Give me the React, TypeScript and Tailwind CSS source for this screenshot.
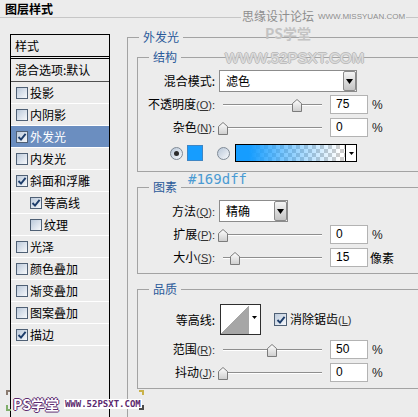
import React from "react";

function CheckBox({ checked, size = 12 }: { checked?: boolean; size?: number }) {
  return (
    <span
      className={`relative inline-flex shrink-0 items-center justify-center border border-[#4f6075] bg-gradient-to-br from-[#bccadb] to-[#f6f8fb] ${
        size === 13 ? "w-[13px] h-[13px]" : "w-[12px] h-[12px]"
      }`}
    >
      {checked && (
        <svg width="10" height="10" viewBox="0 0 10 10" className="absolute">
          <path d="M1.5 5 L4 7.6 L8.6 1.8" fill="none" stroke="#1d3d6b" strokeWidth="1.9" />
        </svg>
      )}
    </span>
  );
}

function Arrow() {
  return (
    <svg width="7" height="5" viewBox="0 0 7 5">
      <path d="M0 0 H7 L3.5 5 Z" fill="#000" />
    </svg>
  );
}

function Label({ text, k }: { text: string; k?: string }) {
  return (
    <div className="w-[77px] shrink-0 text-right whitespace-nowrap leading-[16px]">
      {text}
      {k ? (
        <span className="font-['Liberation_Sans',sans-serif] text-[11px] text-[#333]">
          (<span className="underline">{k}</span>):
        </span>
      ) : (
        ":"
      )}
    </div>
  );
}

function Thumb() {
  return (
    <svg width="10" height="13" viewBox="0 0 10 13">
      <defs>
        <linearGradient id="thumbg" x1="0" y1="0" x2="0" y2="1">
          <stop offset="0" stopColor="#ffffff" />
          <stop offset="1" stopColor="#cdcdcd" />
        </linearGradient>
      </defs>
      <path d="M0.5 12.5 V4.5 L5 0.5 L9.5 4.5 V12.5 Z" fill="url(#thumbg)" stroke="#7b7b7b" />
    </svg>
  );
}

function Slider({ pos }: { pos: number }) {
  return (
    <div className="relative w-[111px] h-full shrink-0">
      <div className="absolute left-[8px] top-[9px] w-[99px] h-[1px] bg-[#8e8e8e] shadow-[0_1px_0_#ffffff]" />
      <div className="absolute top-[4px] flex" style={{ left: pos }}>
        <Thumb />
      </div>
    </div>
  );
}

function NumBox({ v }: { v: string }) {
  return (
    <div className="ml-[4px] w-[38px] h-[19px] shrink-0 border border-[#b3b3b3] bg-white pl-[5px] font-['Liberation_Sans',sans-serif] text-[12px] leading-[17px]">
      {v}
    </div>
  );
}

function SliderRow({
  text,
  k,
  pos,
  v,
  unit,
  cls,
}: {
  text: string;
  k: string;
  pos: number;
  v: string;
  unit: string;
  cls: string;
}) {
  return (
    <div className={`flex items-center h-[19px] ${cls}`}>
      <Label text={text} k={k} />
      <Slider pos={pos} />
      <NumBox v={v} />
      {unit === "%" ? (
        <span className="ml-[4px] font-['Liberation_Sans',sans-serif] text-[12px] text-[#222]">%</span>
      ) : (
        <span className="ml-[2px] text-[12px]">{unit}</span>
      )}
    </div>
  );
}

function Select({ text, w }: { text: string; w: string }) {
  return (
    <div className={`ml-[4px] h-full flex border border-[#8c8c8c] bg-white ${w}`}>
      <div className="flex-1 pl-[6px] leading-[20px]">{text}</div>
      <div className="w-[13px] h-full rounded-[2px] border border-[#8a8a8a] bg-gradient-to-b from-[#f4f4f4] to-[#c4c4c4] flex items-center justify-center">
        <Arrow />
      </div>
    </div>
  );
}

function GroupLabel({ text }: { text: string }) {
  return (
    <span className="absolute left-[11px] top-[-9px] px-[4px] bg-[#ececec] text-[#2b5a9a] leading-[16px] text-[12px]">
      {text}
    </span>
  );
}

function Radio({ on }: { on?: boolean }) {
  return (
    <span className="relative inline-flex w-[13px] h-[13px] shrink-0 items-center justify-center rounded-full border border-[#7f8a96] bg-gradient-to-br from-[#b9c7d8] to-[#f7f9fc]">
      {on && <span className="w-[5px] h-[5px] rounded-full bg-[#2b2b2b]" />}
    </span>
  );
}

const items: { t: string; c?: boolean; sel?: boolean; indent?: boolean }[] = [
  { t: "投影" },
  { t: "内阴影" },
  { t: "外发光", c: true, sel: true },
  { t: "内发光" },
  { t: "斜面和浮雕", c: true },
  { t: "等高线", c: true, indent: true },
  { t: "纹理", indent: true },
  { t: "光泽" },
  { t: "颜色叠加" },
  { t: "渐变叠加" },
  { t: "图案叠加" },
  { t: "描边", c: true },
];

export default function App() {
  return (
    <div className="relative w-[418px] h-[417px] overflow-hidden bg-[#ececec] text-[12px] text-black font-['Noto_Sans_CJK_SC','Noto_Sans',sans-serif]">
      {/* title bar */}
      <div className="h-[18px] border-b border-[#c6c6c6] pl-[5px] font-bold text-[12px] leading-[17px]">图层样式</div>

      <div className="flex">
        {/* left list */}
        <div className="ml-[10px] mt-[16px] w-[100px] h-[400px] shrink-0 border border-b-0 border-black">
          <div className="h-[24px] border-b-[3px] border-double border-black pl-[4px] leading-[21px]">样式</div>
          <div className="h-[23px] border-b border-[#505050] pl-[4px] leading-[22px]">混合选项:默认</div>
          {items.map((it) => (
            <div
              key={it.t}
              className={`h-[22px] border-b border-white flex items-center gap-[2px] ${
                it.indent ? "pl-[19px]" : "pl-[5px]"
              } ${it.sel ? "bg-[#6b8ec0] text-white" : ""}`}
            >
              <CheckBox checked={it.c} />
              <span className="leading-[21px]">{it.t}</span>
            </div>
          ))}
        </div>

        {/* right: 外发光 */}
        <div className="relative ml-[17px] mt-[19px] flex-1 h-[400px] border-l border-t border-[#a3a3a3] pl-[9px] pt-[19px]">
          <GroupLabel text="外发光" />

          {/* 结构 */}
          <div className="relative h-[115px] border border-r-0 border-[#a3a3a3] pt-[12px]">
            <GroupLabel text="结构" />
            <div className="flex items-center h-[22px]">
              <Label text="混合模式" />
              <Select text="滤色" w="w-[138px]" />
            </div>
            <SliderRow text="不透明度" k="O" pos={77} v="75" unit="%" cls="mt-[3px]" />
            <SliderRow text="杂色" k="N" pos={3} v="0" unit="%" cls="mt-[4px]" />
            <div className="mt-[7px] h-[18px] flex items-center">
              <span className="ml-[32px] flex">
                <Radio on />
              </span>
              <span className="ml-[4px] w-[16px] h-[16px] bg-[#169dff] border border-[#3f86c4]" />
              <span className="ml-[14px] flex">
                <Radio />
              </span>
              <div className="ml-[5px] w-[122px] h-[18px] border border-black flex bg-white">
                <div className="relative flex-1 h-full bg-[image:repeating-conic-gradient(#cdcdcd_0%_25%,#ffffff_0%_50%)] bg-[length:8px_8px]">
                  <div className="absolute inset-0 bg-[image:linear-gradient(to_right,#169dff_0%,#169dff_12%,rgba(22,157,255,0.55)_45%,rgba(22,157,255,0)_95%)]" />
                </div>
                <div className="w-[11px] h-full border-l border-black bg-white flex items-center justify-center">
                  <svg width="5" height="3" viewBox="0 0 5 3">
                    <path d="M0 0 H5 L2.5 3 Z" fill="#000" />
                  </svg>
                </div>
              </div>
            </div>
          </div>

          {/* color code */}
          <div className="h-[15px] pl-[51px] font-['DejaVu_Sans_Mono',monospace] text-[14px] leading-[15px] text-[#4b9bd3]">
            #169dff
          </div>

          {/* 图素 */}
          <div className="relative h-[87px] border border-r-0 border-[#a3a3a3] pt-[12px]">
            <GroupLabel text="图素" />
            <div className="flex items-center h-[22px]">
              <Label text="方法" k="Q" />
              <Select text="精确" w="w-[69px]" />
            </div>
            <SliderRow text="扩展" k="P" pos={3} v="0" unit="%" cls="mt-[3px]" />
            <SliderRow text="大小" k="S" pos={15} v="15" unit="像素" cls="mt-[4px]" />
          </div>

          {/* 品质 */}
          <div className="relative mt-[15px] h-[100px] border border-r-0 border-[#a3a3a3] pt-[14px]">
            <GroupLabel text="品质" />
            <div className="flex items-center h-[31px]">
              <Label text="等高线" />
              <div className="ml-[5px] w-[41px] h-[31px] border border-[#2e2e2e] flex bg-white">
                <div className="w-[28px] h-full bg-[image:linear-gradient(to_top_left,#a6a6a6_50%,#ffffff_50%)]" />
                <div className="flex-1 h-full flex justify-center pt-[11px]">
                  <svg width="5" height="3" viewBox="0 0 5 3">
                    <path d="M0 0 H5 L2.5 3 Z" fill="#000" />
                  </svg>
                </div>
              </div>
              <span className="ml-[13px] flex">
                <CheckBox checked size={13} />
              </span>
              <span className="ml-[3px] leading-[16px]">
                消除锯齿
                <span className="font-['Liberation_Sans',sans-serif] text-[11px] text-[#333]">
                  (<span className="underline">L</span>)
                </span>
              </span>
            </div>
            <SliderRow text="范围" k="R" pos={52} v="50" unit="%" cls="mt-[5px]" />
            <SliderRow text="抖动" k="J" pos={3} v="0" unit="%" cls="mt-[4px]" />
          </div>
        </div>
      </div>

      {/* watermarks */}
      <div className="absolute left-[241px] top-[9px] flex items-end gap-[4px] whitespace-nowrap bg-[#ececec] px-[1px] text-[#8e8e8e]">
        <span className="text-[12px] leading-[14px]">思缘设计论坛</span>
        <span className="font-['Liberation_Sans',sans-serif] text-[8px] leading-[12px]">WWW.MISSYUAN.COM</span>
      </div>
      <div className="absolute left-[265px] top-[25px] whitespace-nowrap text-[14px] leading-[16px] text-[#c3c3c3] font-bold">PS学堂</div>
      <div className="absolute left-[225px] top-[50px] whitespace-nowrap font-['Liberation_Sans',sans-serif] text-[15px] leading-[16px] text-[#dddddd] [text-shadow:1px_0_#bdbdbd,-1px_0_#bdbdbd,0_1px_#bdbdbd,0_-1px_#bdbdbd]">
        WWW.52PSXT.COM
      </div>

      {/* bottom-left logo */}
      <div className="absolute left-[13px] top-[396px] flex items-center gap-[5px] whitespace-nowrap">
        <span className="text-[14px] leading-[16px] font-bold text-white [text-shadow:1px_0_#5b2a6e,-1px_0_#5b2a6e,0_1px_#5b2a6e,0_-1px_#5b2a6e]">
          PS学堂
        </span>
        <span className="bg-white px-[1px] font-['DejaVu_Sans_Mono',monospace] text-[9px] leading-[10px] font-bold text-[#5b2a6e]">
          WWW.52PSXT.COM
        </span>
      </div>
      <span className="absolute left-[6px] top-[390px] w-[4px] h-[5px] border-l-2 border-t-2 border-[#8a7b70]" />
      <span className="absolute left-[6px] top-[405px] w-[5px] h-[6px] border-l-2 border-b-2 border-[#7fae6a]" />
      <span className="absolute left-[139px] top-[390px] w-[5px] h-[5px] border-r-2 border-t-2 border-[#c9b24a]" />
      <span className="absolute left-[139px] top-[405px] w-[5px] h-[5px] border-r-2 border-b-2 border-[#4a4a4a]" />
    </div>
  );
}
